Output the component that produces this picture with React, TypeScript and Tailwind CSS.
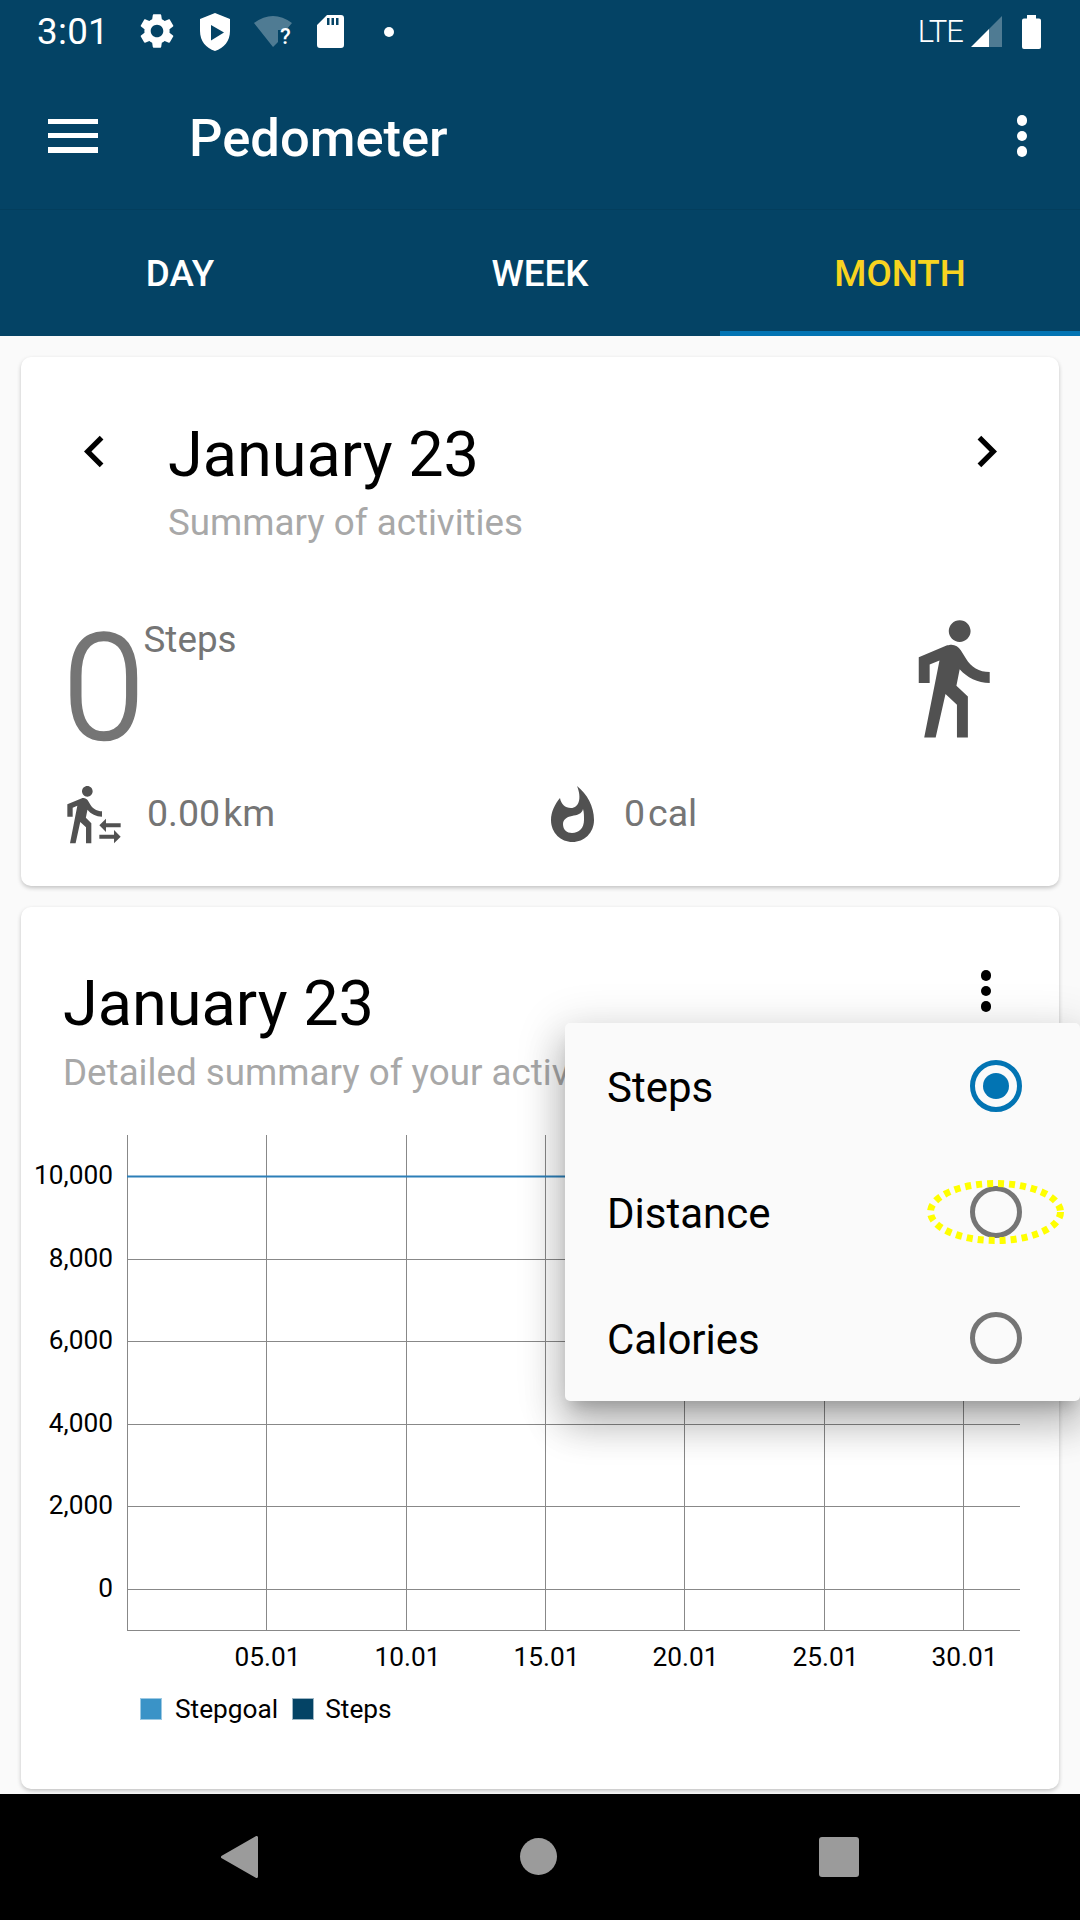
import React from "react";

const walk = "M13.5 5.5c1.1 0 2-.9 2-2s-.9-2-2-2-2 .9-2 2 .9 2 2 2zM9.8 8.9L7 23h2.1l1.8-8 2.1 2v6h2v-7.5l-2.1-2 .6-3C14.8 12 16.8 13 19 13v-2c-1.9 0-3.5-1-4.3-2.4l-1-1.6c-.4-.6-1-1-1.7-1-.3 0-.5.1-.8.1L6 8.3V13h2V9.6l1.8-.7";
const transfer = "M16.49 15.5v-1.75L14 16.25l2.49 2.5V17H22v-1.5zm3.02 4.25H14v1.5h5.51V23L22 20.5 19.51 18zM9.5 5.5c1.1 0 2-.9 2-2s-.9-2-2-2-2 .9-2 2 .9 2 2 2zM5.75 8.9L3 23h2.1l1.75-8L9 17v6h2v-7.55L8.95 13.4l.6-3C10.85 12 12.8 13 15 13v-2c-1.85 0-3.45-1-4.35-2.45l-.95-1.6C9.35 6.35 8.7 6 8 6c-.25 0-.5.05-.75.15L2 8.3V13h2V9.65l1.75-.75";
const gear = "M19.14 12.94c.04-.3.06-.61.06-.94 0-.32-.02-.64-.07-.94l2.03-1.58c.18-.14.23-.41.12-.61l-1.92-3.32c-.12-.22-.37-.29-.59-.22l-2.39.96c-.5-.38-1.03-.7-1.62-.94l-.36-2.54c-.04-.24-.24-.41-.48-.41h-3.84c-.24 0-.43.17-.47.41l-.36 2.54c-.59.24-1.13.57-1.62.94l-2.39-.96c-.22-.08-.47 0-.59.22L2.74 8.87c-.12.21-.08.47.12.61l2.03 1.58c-.05.3-.09.63-.09.94s.02.64.07.94l-2.03 1.58c-.18.14-.23.41-.12.61l1.92 3.32c.12.22.37.29.59.22l2.39-.96c.5.38 1.03.7 1.62.94l.36 2.54c.05.24.24.41.48.41h3.84c.24 0 .44-.17.47-.41l.36-2.54c.59-.24 1.13-.56 1.62-.94l2.39.96c.22.08.47 0 .59-.22l1.92-3.32c.12-.22.07-.47-.12-.61l-2.01-1.58zM12 15.6c-1.98 0-3.6-1.62-3.6-3.6s1.62-3.6 3.6-3.6 3.6 1.62 3.6 3.6-1.62 3.6-3.6 3.6z";

function StatusBar() {
  return (
    <div className="relative h-[63px] flex items-center justify-between text-white pl-[37px] pr-[39px]">
      <div className="flex items-center">
        <span className="text-[36.75px] leading-none w-[99px] mt-[1px] tracking-[0.3px]">3:01</span>
        <svg width="42" height="42" viewBox="0 0 24 24" fill="#fff" className="mb-[1px]"><path d={gear} /></svg>
        <svg width="30" height="38" viewBox="0 0 30 38" className="ml-[22px]">
          <path fillRule="evenodd" fill="#fff" d="M15 0L30 6V18C30 28 24 35 15 38C6 35 0 28 0 18V6ZM11 12V27.5L24 19.5Z" />
        </svg>
        <div className="relative w-[38px] h-[31px] ml-[24px]">
          <svg width="38" height="31" viewBox="0 0 38 31"><path fill="#fff" fillOpacity="0.3" d="M0 7Q19 -7 38 7L32 14H24V26L19 31Z" /></svg>
          <span className="absolute left-[26px] top-[10px] text-[22px] leading-[22px] font-medium">?</span>
        </div>
        <svg width="27" height="33" viewBox="0 0 27 33" className="ml-[25px]">
          <path fillRule="evenodd" fill="#fff" d="M10 0H24A3 3 0 0 1 27 3V30A3 3 0 0 1 24 33H3A3 3 0 0 1 0 30V10ZM10 3V10H12.5V3ZM14.5 3V10H17V3ZM19 3V10H21.5V3Z" />
        </svg>
        <div className="w-[10px] h-[10px] rounded-full bg-white ml-[40px]" />
      </div>
      <div className="flex items-center">
        <span className="text-[31px] leading-none font-light mr-[8px] tracking-[-1px]">LTE</span>
        <svg width="31" height="31" viewBox="0 0 31 31" className="mr-[20px]">
          <path fill="#fff" fillOpacity="0.3" d="M31 0V31H18V13Z" />
          <path fill="#fff" d="M18 13V31H0Z" />
        </svg>
        <svg width="19" height="34" viewBox="0 0 19 34">
          <path fill="#fff" d="M5 0H14V3.5H17A2 2 0 0 1 19 5.5V32A2 2 0 0 1 17 34H2A2 2 0 0 1 0 32V5.5A2 2 0 0 1 2 3.5H5Z" />
        </svg>
      </div>
    </div>
  );
}

function AppBar() {
  return (
    <div className="h-[147px] flex items-center border-b border-[#033e5d] pl-[48px] pr-[53px]">
      <div className="w-[50px] flex flex-col gap-[9px]">
        <div className="h-[5px] bg-white" />
        <div className="h-[5px] bg-white" />
        <div className="h-[6px] bg-white" />
      </div>
      <span className="ml-[91px] mt-[5px] text-[52.5px] leading-none font-medium text-white flex-1">Pedometer</span>
      <div className="flex flex-col gap-[5px]">
        <div className="w-[10.5px] h-[10.5px] rounded-full bg-white" />
        <div className="w-[10.5px] h-[10.5px] rounded-full bg-white" />
        <div className="w-[10.5px] h-[10.5px] rounded-full bg-white" />
      </div>
    </div>
  );
}

function Tabs() {
  return (
    <div className="h-[126px] grid grid-cols-3 text-[36.75px] font-medium">
      <div className="flex items-center justify-center text-white pt-[7px] border-b-[5px] border-transparent">DAY</div>
      <div className="flex items-center justify-center text-white pt-[7px] border-b-[5px] border-transparent">WEEK</div>
      <div className="flex items-center justify-center text-[#f8d320] pt-[7px] border-b-[5px] border-[#0274b3]">MONTH</div>
    </div>
  );
}

function Chevron({ right }: { right?: boolean }) {
  return (
    <svg width="63" height="63" viewBox="0 0 24 24" fill="#000">
      <path d={right ? "M8.59 16.59L13.17 12 8.59 7.41 10 6l6 6-6 6z" : "M15.41 16.59L10.83 12l4.58-4.59L14 6l-6 6 6 6z"} />
    </svg>
  );
}

function SummaryCard() {
  return (
    <div className="h-[529px] bg-white rounded-[10px] shadow-[0_2px_4px_rgba(0,0,0,0.22)] relative">
      <div className="flex items-start pl-[42px] pr-[41px] pt-[63px]">
        <Chevron />
        <div className="ml-[42px] flex-1 -mt-[2px]">
          <div className="text-[63px] leading-[74px] text-black">January 23</div>
          <div className="text-[36.75px] leading-[43px] text-[#a8a8a8] mt-[9px]">Summary of activities</div>
        </div>
        <Chevron right />
      </div>
      <div className="flex items-start pl-[42px] mt-[59px] h-[167px]">
        <span className="text-[147px] leading-[172px] text-[#757575] font-light [-webkit-text-stroke:2.5px_#757575]">0</span>
        <span className="text-[36.75px] leading-[43px] text-[#757575] ml-[-1px] mt-[15px]">Steps</span>
        <svg width="131" height="131" viewBox="0 0 24 24" fill="#515151" className="ml-auto mr-[42px] mt-[9px]"><path d={walk} /></svg>
      </div>
      <div className="flex items-center pl-[41px] mt-[12px]">
        <svg width="64" height="64" viewBox="0 0 24 24" fill="#515151"><path d={transfer} /></svg>
        <span className="text-[37.5px] leading-none text-[#757575] ml-[21px] w-[404px]">0.00<span className="ml-[3px]">km</span></span>
        <svg width="43" height="56" viewBox="0 0 43 56">
          <path fill="#515151" fillRule="evenodd" d="M26 0C36 8 43 20 43 34C43 47 33 56 21.5 56C10 56 0 47 0 34C0 26 4 18 9 12C10 18 14 22 20 22C28 22 31 12 26 0ZM32 23C31 28 26 29 21 30C15 31 12 34 12 38C12 44 16 47 21 47C28 47 33 42 33 34C33 30 33 26 32 23Z" />
        </svg>
        <span className="text-[37.5px] leading-none text-[#757575] ml-[30px]">0<span className="ml-[3px]">cal</span></span>
      </div>
    </div>
  );
}

const xs = [266.5, 406.5, 545.5, 684.5, 824.5, 963.5];
const xl = ["05.01", "10.01", "15.01", "20.01", "25.01", "30.01"];
const ys: [number, string][] = [[1259, "8,000"], [1341, "6,000"], [1424, "4,000"], [1506, "2,000"], [1589, "0"]];

function Chart() {
  const oy = 1130;
  const ox = 21;
  return (
    <svg width="1038" height="550" viewBox={`${ox} ${oy} 1038 550`} className="block" fontFamily="Roboto" fontSize="26.25" fill="#000">
      {xs.map((x) => <line key={x} x1={x} x2={x} y1={1135} y2={1630} stroke="#888" strokeWidth="1" />)}
      <line x1={127.5} x2={127.5} y1={1135} y2={1630.5} stroke="#888" strokeWidth="1" />
      {ys.map(([y]) => <line key={y} x1={127} x2={1020} y1={y + 0.5} y2={y + 0.5} stroke="#888" strokeWidth="1" />)}
      <line x1={127} x2={1020} y1={1630.5} y2={1630.5} stroke="#888" strokeWidth="1" />
      <line x1={127} x2={1020} y1={1176.5} y2={1176.5} stroke="#2c7fb8" strokeWidth="2" />
      <text x={113} y={1184} textAnchor="end">10,000</text>
      {ys.map(([y, t]) => <text key={t} x={113} y={y + 8} textAnchor="end">{t}</text>)}
      {xs.map((x, i) => <text key={x} x={x + 1} y={1666} textAnchor="middle">{xl[i]}</text>)}
    </svg>
  );
}

function DetailCard() {
  return (
    <div className="h-[882px] bg-white rounded-[10px] shadow-[0_2px_4px_rgba(0,0,0,0.22)]">
      <div className="flex items-start pl-[42px] pr-[68px] pt-[60px]">
        <div className="flex-1 min-w-0">
          <div className="text-[63px] leading-[74px] text-black">January 23</div>
          <div className="text-[36.75px] leading-[43px] text-[#a8a8a8] mt-[9.5px] whitespace-nowrap">Detailed summary of your activities</div>
        </div>
        <div className="flex flex-col gap-[5px] mt-[3px]">
          <div className="w-[10.5px] h-[10.5px] rounded-full bg-black" />
          <div className="w-[10.5px] h-[10.5px] rounded-full bg-black" />
          <div className="w-[10.5px] h-[10.5px] rounded-full bg-black" />
        </div>
      </div>
      <div className="mt-[36.5px]">
        <Chart />
      </div>
      <div className="flex items-center pl-[119px] mt-[14px] text-[26.25px] leading-[30px] text-black">
        <div className="w-[22px] h-[22px] bg-[#3a93c7] border border-[#9cc9e3]" />
        <span className="ml-[13px]">Stepgoal</span>
        <div className="w-[22px] h-[22px] bg-[#044365] border border-[#9db6c4] ml-[14px]" />
        <span className="ml-[11px]">Steps</span>
      </div>
    </div>
  );
}

function Radio({ on }: { on?: boolean }) {
  return (
    <div className={`w-[52px] h-[52px] rounded-full border-[5px] flex items-center justify-center ${on ? "border-[#0274b3]" : "border-[#757575]"}`}>
      {on ? <div className="w-[26px] h-[26px] rounded-full bg-[#0274b3]" /> : null}
    </div>
  );
}

function Menu() {
  const items = ["Steps", "Distance", "Calories"];
  return (
    <div className="absolute left-[565px] top-[1023px] w-[515px] bg-[#fafafa] rounded-[5px] shadow-[0_24px_38px_3px_rgba(0,0,0,0.2),0_9px_46px_8px_rgba(0,0,0,0.12),0_11px_15px_-7px_rgba(0,0,0,0.2)]">
      {items.map((t, i) => (
        <div key={t} className="h-[126px] flex items-center justify-between pl-[42px] pr-[58px]">
          <span className="text-[42px] leading-none text-black mt-[4px]">{t}</span>
          <Radio on={i === 0} />
        </div>
      ))}
    </div>
  );
}

function NavBar() {
  return (
    <div className="h-[126px] bg-black flex items-center justify-center relative">
      <div className="w-[638px] flex items-center justify-between">
        <svg width="37" height="42" viewBox="0 0 37 42">
          <path fill="#9b9b9b" stroke="#9b9b9b" strokeWidth="3" strokeLinejoin="round" d="M1.5 21L35.5 1.5V40.5Z" />
        </svg>
        <div className="w-[37px] h-[37px] rounded-full bg-[#9b9b9b] mb-[1px]" />
        <div className="w-[40px] h-[40px] rounded-[3px] bg-[#9b9b9b]" />
      </div>
    </div>
  );
}

export default function App() {
  return (
    <div className="relative w-[1080px] h-[1920px] overflow-hidden bg-[#fafafa] flex flex-col font-['Roboto',sans-serif]">
      <div className="bg-[#044365]">
        <StatusBar />
        <AppBar />
        <Tabs />
      </div>
      <div className="flex-1 px-[21px] pt-[21px] flex flex-col gap-[21px] overflow-hidden">
        <SummaryCard />
        <DetailCard />
      </div>
      <NavBar />
      <Menu />
      <svg width="141" height="68" viewBox="0 0 141 68" className="absolute left-[925px] top-[1178px]">
        <ellipse cx="70.5" cy="34" rx="65" ry="28.5" fill="none" stroke="#ffff00" strokeWidth="7" strokeDasharray="6 5" />
      </svg>
    </div>
  );
}
